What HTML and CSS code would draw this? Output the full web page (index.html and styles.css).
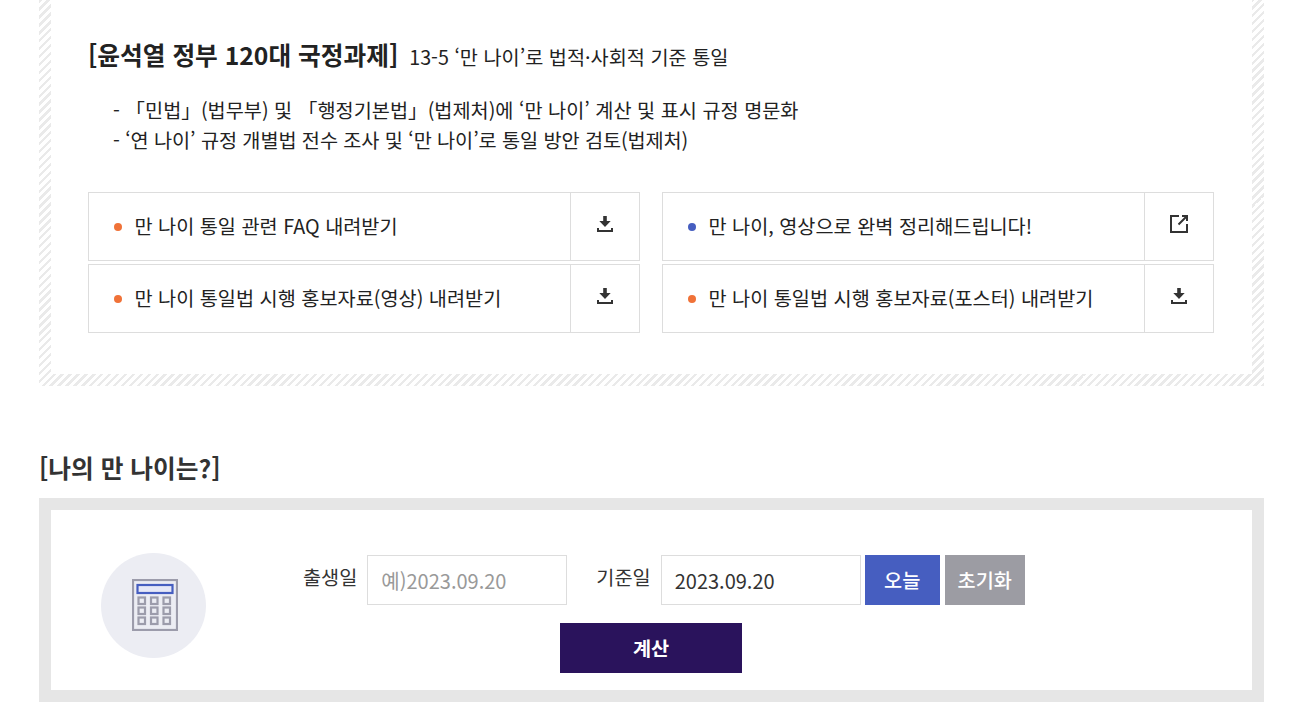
FILE: index.html
```html
<!DOCTYPE html>
<html lang="ko">
<head>
    <title>나의 만 나이는?</title>
    <link rel="stylesheet" href="styles.css">
</head>
<body>
    <div class="wrap">
        <div class="hatch-box">
            <div class="hatch-inner">
                <p class="policy-title"><strong>[윤석열 정부 120대 국정과제]</strong><span>13-5 ‘만 나이’로 법적·사회적 기준 통일</span></p>
                <ul class="policy-list">
                    <li>- 「민법」(법무부) 및 「행정기본법」(법제처)에 ‘만 나이’ 계산 및 표시 규정 명문화</li>
                    <li class="tight">- ‘연 나이’ 규정 개별법 전수 조사 및 ‘만 나이’로 통일 방안 검토(법제처)</li>
                </ul>
                <div class="links">
                    <a class="link-row">
                        <span class="link-text"><i class="dot"></i>만 나이 통일 관련 FAQ 내려받기</span>
                        <span class="link-icon">
                            <svg width="16" height="16" viewBox="0 0 16 16"><path class="ico-fill" d="M6.200 0h3.600v5h3.900L8 11 2.300 5h3.900z"/><path class="ico-line" d="M1 12v3h14v-3"/></svg>
                        </span>
                    </a>
                    <a class="link-row">
                        <span class="link-text"><i class="dot blue"></i>만 나이, 영상으로 완벽 정리해드립니다!</span>
                        <span class="link-icon">
                            <svg width="18" height="18" viewBox="0 0 18 18"><path class="ico-line" d="M9 1H1v16h16V9"/><path class="ico-line" d="M8.500 9.500L16 2M12 1h5v5"/></svg>
                        </span>
                    </a>
                    <a class="link-row">
                        <span class="link-text"><i class="dot"></i>만 나이 통일법 시행 홍보자료(영상) 내려받기</span>
                        <span class="link-icon">
                            <svg width="16" height="16" viewBox="0 0 16 16"><path class="ico-fill" d="M6.200 0h3.600v5h3.900L8 11 2.300 5h3.900z"/><path class="ico-line" d="M1 12v3h14v-3"/></svg>
                        </span>
                    </a>
                    <a class="link-row">
                        <span class="link-text"><i class="dot"></i>만 나이 통일법 시행 홍보자료(포스터) 내려받기</span>
                        <span class="link-icon">
                            <svg width="16" height="16" viewBox="0 0 16 16"><path class="ico-fill" d="M6.200 0h3.600v5h3.900L8 11 2.300 5h3.900z"/><path class="ico-line" d="M1 12v3h14v-3"/></svg>
                        </span>
                    </a>
                </div>
            </div>
        </div>

        <h2 class="calc-title">[나의 만 나이는?]</h2>
        <div class="calc-box">
            <div class="calc-icon">
                <svg width="46" height="52" viewBox="0 0 46 52">
                    <rect class="calc-body" x="1" y="1" width="44" height="50"/>
                    <rect class="calc-screen" x="5.500" y="6" width="35" height="8"/>
                    <g class="calc-keys">
                        <rect x="6.500" y="18.500" width="6.500" height="6.500"/><rect x="19" y="18.500" width="6.500" height="6.500"/><rect x="31.500" y="18.500" width="6.500" height="6.500"/>
                        <rect x="6.500" y="28.500" width="6.500" height="6.500"/><rect x="19" y="28.500" width="6.500" height="6.500"/><rect x="31.500" y="28.500" width="6.500" height="6.500"/>
                        <rect x="6.500" y="38.500" width="6.500" height="6.500"/><rect x="19" y="38.500" width="6.500" height="6.500"/><rect x="31.500" y="38.500" width="6.500" height="6.500"/>
                    </g>
                </svg>
            </div>
            <div class="calc-form">
                <div class="calc-row">
                    <label class="calc-label">출생일</label>
                    <input class="calc-input" type="text" placeholder="예)2023.09.20">
                    <label class="calc-label second">기준일</label>
                    <input class="calc-input" type="text" value="2023.09.20">
                    <button class="btn btn-today">오늘</button>
                    <button class="btn btn-reset">초기화</button>
                </div>
                <button class="btn btn-calc">계산</button>
            </div>
        </div>
    </div>
</body>
</html>
```

FILE: styles.css
```css
* { box-sizing: border-box; }
body { margin: 0; background: #fff; color: #222; font-family: "Noto Sans CJK KR", "Noto Sans", sans-serif; font-size: 19.700px; }
.wrap { width: 1225px; margin: 0 auto; height: 714px; overflow: hidden; }

.hatch-box { height: 386px; padding: 0 12px 12px; background: repeating-linear-gradient(135deg, #eaeaea 0, #eaeaea 2.400px, #fff 2.400px, #fff 5.600px); }
.hatch-inner { height: 100%; padding: 35px 38px 0 37px; background: #fff; }

.policy-title { margin: 0; display: flex; align-items: baseline; gap: 11px; line-height: 38px; }
.policy-title strong { font-size: 24.700px; font-weight: 700; }
.policy-list { list-style: none; margin: 19px 0 0; padding: 0 0 0 25px; line-height: 30px; }
.tight { letter-spacing: -0.090px; }

.links { display: grid; grid-template-columns: 552px 552px; column-gap: 22px; row-gap: 3px; margin-top: 37px; }
.link-row { display: flex; height: 69px; border: 1px solid #ddd; }
.link-text { flex: 1; display: flex; align-items: center; padding: 0 0 2px 25px; }
.dot { width: 8px; height: 8px; margin: 2px 12.400px 0 0; border-radius: 50%; background: #f07238; }
.dot.blue { background: #465ec0; }
.link-icon { width: 69px; border-left: 1px solid #ddd; display: flex; align-items: center; justify-content: center; padding-bottom: 5px; }
.ico-fill { fill: #333; }
.ico-line { fill: none; stroke: #333; stroke-width: 2; }

.calc-title { margin: 0; padding-top: 62px; font-size: 24.700px; font-weight: 700; line-height: 38px; color: #333; height: 112px; }
.calc-box { display: flex; height: 204px; border: 12px solid #e6e6e6; background: #fff; }
.calc-icon { flex: none; display: flex; align-items: center; justify-content: center; width: 105px; height: 105px; margin: 43px 0 0 50px; padding: 0 0 1px 2px; border-radius: 50%; background: #ecedf3; }
.calc-body { fill: #ecedf3; stroke: #9c9cab; stroke-width: 2.200; }
.calc-screen { fill: #e6e8f7; stroke: #465ec0; stroke-width: 2.200; }
.calc-keys rect { fill: #ecedf3; stroke: #9c9cab; stroke-width: 2.200; }

.calc-form { margin: 45px 0 0 97px; }
.calc-row { display: flex; align-items: center; height: 50px; }
.calc-label { margin-right: 10px; padding-bottom: 7px; color: #333; }
.calc-label.second { margin-left: 29px; }
.calc-input { width: 200px; height: 50px; padding: 0 13px; border: 1px solid #ddd; font: inherit; font-size: 20px; color: #333; }
.calc-input::placeholder { color: #999; opacity: 1; }
.btn { height: 50px; padding: 0 0 2px; border: 0; color: #fff; font: inherit; font-weight: 500; }
.btn-today { width: 75px; margin-left: 4px; background: #465ec0; }
.btn-reset { width: 80px; margin-left: 5px; background: #9c9ca3; }
.btn-calc { display: block; width: 182px; margin: 18px 0 0 257px; background: #2a135c; font-weight: 700; }
```
